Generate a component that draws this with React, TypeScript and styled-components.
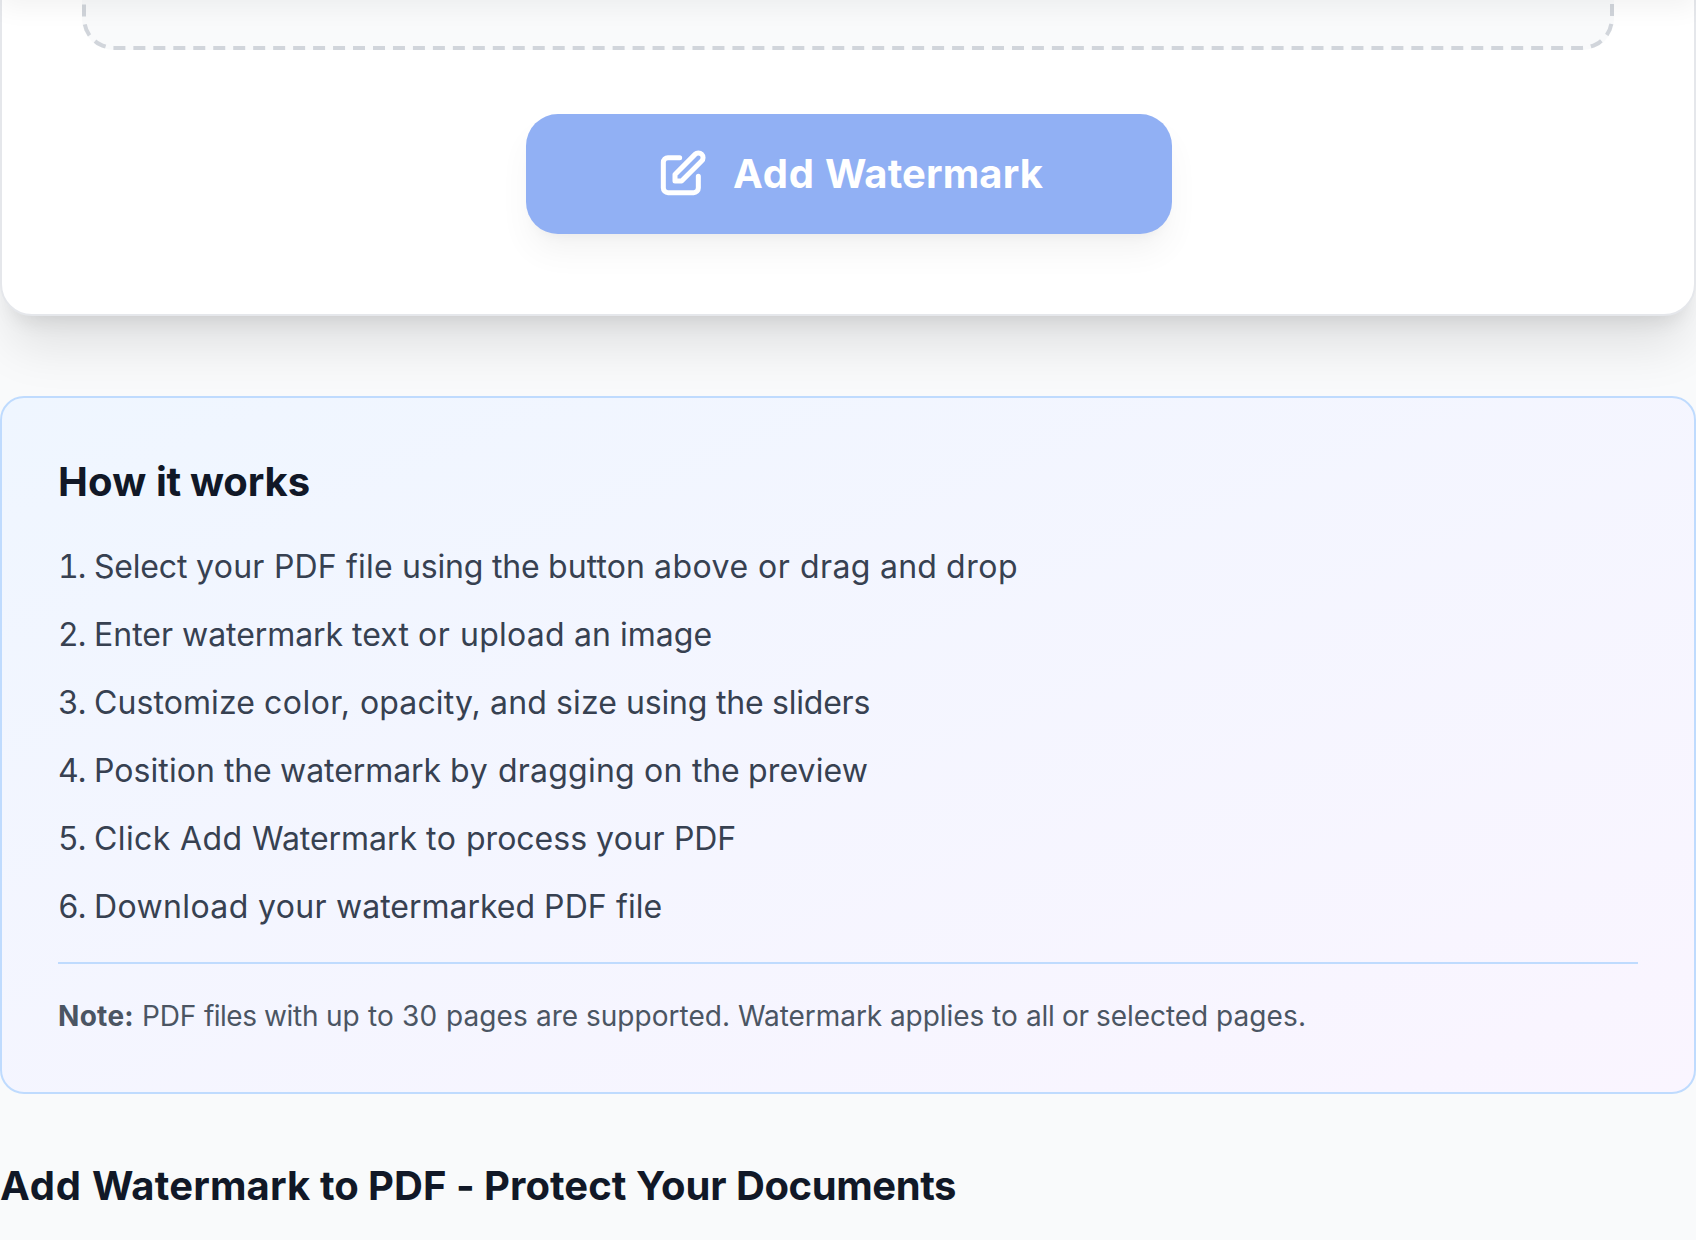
import React from 'react';
import styled, { createGlobalStyle } from 'styled-components';

const fontStack = 'Inter, "Liberation Sans", sans-serif';

const GlobalStyle = createGlobalStyle`
  *, *::before, *::after { box-sizing: border-box; }
  html, body { margin: 0; padding: 0; overflow: hidden; }
  body {
    background: #f9fafb;
    color: #111827;
    font-family: ${fontStack};
  }
  h2, h3, p, ol { margin: 0; padding: 0; }
`;

const Page = styled.main`
  position: relative;
  display: flow-root;
  width: 100%;
  height: 1240px;
  overflow: hidden;
`;

const HeaderBar = styled.header`
  position: absolute;
  inset: -128px 0 auto;
  height: 128px;
  z-index: 2;
  box-shadow: 0 8px 24px rgba(0, 0, 0, 0.05);
`;

const ToolCard = styled.section`
  display: flex;
  flex-direction: column;
  align-items: center;
  gap: 64px;
  margin-top: -432px;
  padding: 80px;
  background: #fff;
  border: 2px solid #e5e7eb;
  border-radius: 32px;
  box-shadow: 0 40px 50px -10px rgba(0, 0, 0, 0.1), 0 16px 20px -12px rgba(0, 0, 0, 0.1);
`;

/* The dashed outline is drawn at half size and doubled, for 12px dashes with 8px gaps. */
const DropZone = styled.div`
  width: 100%;
  height: 400px;
  border-radius: 32px;

  &::before {
    content: '';
    display: block;
    width: 50%;
    height: 50%;
    background: #f9fafb;
    border: 2px dashed #d1d5db;
    border-radius: 16px;
    transform: scale(2);
    transform-origin: 0 0;
  }
`;

const SubmitButton = styled.button`
  display: flex;
  align-items: center;
  gap: 23px;
  width: 646px;
  height: 120px;
  margin-left: 2px;
  padding: 0 0 0 128px;
  border: 0;
  border-radius: 32px;
  background: #2563eb;
  color: #fff;
  font-family: ${fontStack};
  white-space: nowrap;
  opacity: 0.5;
  box-shadow: 0 20px 30px -6px rgba(0, 0, 0, 0.1), 0 8px 12px -8px rgba(0, 0, 0, 0.1);
`;

const ButtonLabel = styled.span`
  height: 56px;
  font-size: 40px;
  line-height: 55px;
  font-weight: 700;
`;

const EditIcon = styled.svg`
  width: 56px;
  height: 56px;
  fill: none;
  stroke: currentColor;
  stroke-width: 2.15;
  stroke-linecap: round;
  stroke-linejoin: round;
`;

const InfoCard = styled.section`
  position: relative;
  height: 698px;
  margin-top: 80px;
  padding: 56px;
  border: 2px solid #bfdbfe;
  border-radius: 24px;
  background: linear-gradient(to bottom right, #eff6ff, #faf5ff);
`;

const InfoTitle = styled.h3`
  font-size: 40px;
  line-height: 55px;
  font-weight: 700;
`;

const Steps = styled.ol`
  display: flex;
  flex-direction: column;
  gap: 17px;
  margin-top: 32px;
  list-style: none;
  color: #374151;
  font-size: 32px;
  line-height: 51px;
`;

const Step = styled.li`
  display: flex;
`;

const StepNumber = styled.span`
  width: 36px;
  font-variant-numeric: tabular-nums;
  letter-spacing: -1px;
`;

const Note = styled.p`
  margin-top: 30px;
  padding-top: 32px;
  border-top: 2px solid #bfdbfe;
  color: #4b5563;
  font-size: 28px;
  line-height: 40px;
`;

const NoteLabel = styled.strong`
  font-weight: 700;
`;

const ArticleTitle = styled.h2`
  margin-top: 64px;
  font-size: 40px;
  line-height: 55px;
  font-weight: 700;
`;

const context = document.createElement('canvas').getContext('2d')!;
context.letterSpacing = '0.01px';

const measure = (text: string, size: number, weight: number) => {
  context.font = `${weight} ${size}px ${fontStack}`;
  return context.measureText(text).width;
};

/* Tracking that puts a word on the two-pixel advance grid of its font size. */
const wordTracking = (word: string, size: number, weight: number) => {
  const snap = (value: number) => Math.round(value / 2) * 2;
  let target = 0;
  for (let i = 0; i < word.length; i += 1) {
    const advance = 2 * Math.round(measure(word[i], size / 2, weight));
    const next = word[i + 1];
    const kern = next
      ? measure(word[i] + next, size, weight) - measure(word[i], size, weight) - measure(next, size, weight)
      : 0;
    target += advance + snap(kern);
  }
  return (target - measure(word, size, weight)) / word.length + 0.01;
};

type SnappedTextProps = { text: string; size: number; weight?: number };

function SnappedText({ text, size, weight = 400 }: SnappedTextProps) {
  const words = text.match(/\S+\s*/g) ?? [];
  return (
    <span>
      {words.map((word, index) => (
        <span key={index} style={{ letterSpacing: `${wordTracking(word, size, weight).toFixed(3)}px` }}>
          {word}
        </span>
      ))}
    </span>
  );
}

const steps = [
  'Select your PDF file using the button above or drag and drop',
  'Enter watermark text or upload an image',
  'Customize color, opacity, and size using the sliders',
  'Position the watermark by dragging on the preview',
  'Click Add Watermark to process your PDF',
  'Download your watermarked PDF file',
];

export default function App() {
  return (
    <>
      <GlobalStyle />
      <Page>
        <HeaderBar />
        <ToolCard>
          <DropZone />
          <SubmitButton type="button">
            <EditIcon viewBox="0 0 24 24" aria-hidden="true">
              <path d="M11 5H6a2 2 0 00-2 2v11a2 2 0 002 2h11a2 2 0 002-2v-5m-1.414-9.414a2 2 0 112.828 2.828L11.828 15H9v-2.828l8.586-8.586z" />
            </EditIcon>
            <ButtonLabel>
              <SnappedText text="Add Watermark" size={40} weight={700} />
            </ButtonLabel>
          </SubmitButton>
        </ToolCard>
        <InfoCard>
          <InfoTitle>
            <SnappedText text="How it works" size={40} weight={700} />
          </InfoTitle>
          <Steps>
            {steps.map((text, index) => (
              <Step key={text}>
                <StepNumber>{index + 1}.</StepNumber>
                <SnappedText text={text} size={32} />
              </Step>
            ))}
          </Steps>
          <Note>
            <NoteLabel>
              <SnappedText text="Note:" size={28} weight={700} />
            </NoteLabel>
            {' '}
            <SnappedText
              text="PDF files with up to 30 pages are supported. Watermark applies to all or selected pages."
              size={28}
            />
          </Note>
        </InfoCard>
        <ArticleTitle>
          <SnappedText text="Add Watermark to PDF - Protect Your Documents" size={40} weight={700} />
        </ArticleTitle>
      </Page>
    </>
  );
}
